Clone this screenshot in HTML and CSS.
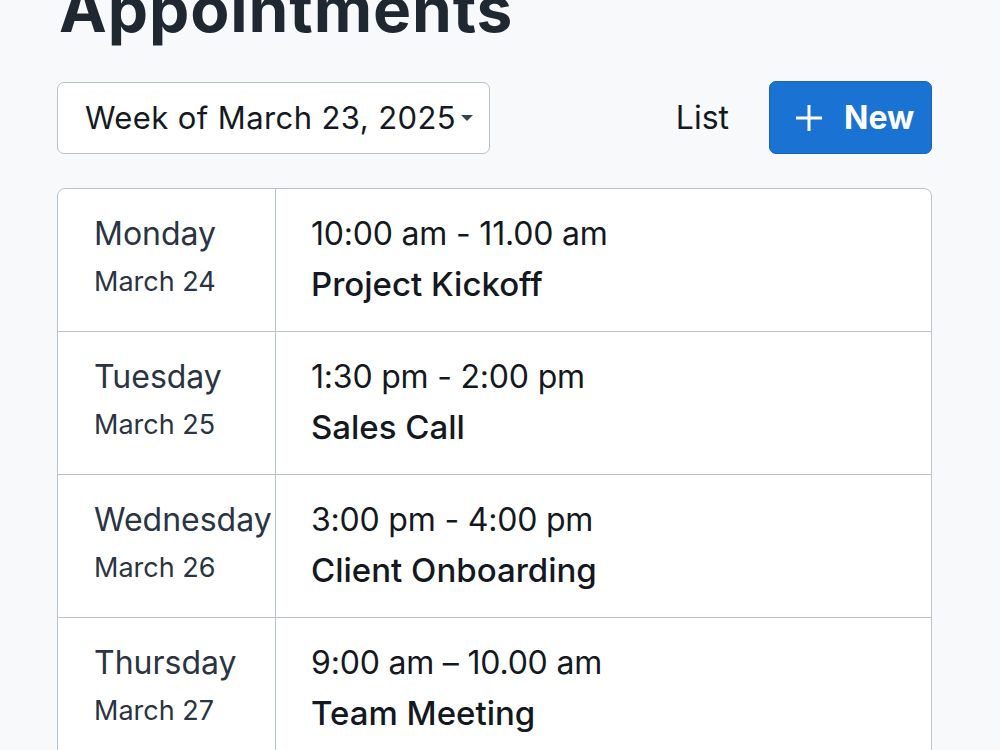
FILE: index.html
```html
<!DOCTYPE html>
<html lang="en">
<head>
    <meta charset="UTF-8">
    <meta name="viewport" content="width=device-width, initial-scale=1.0">
    <title>Appointments</title>
    <link rel="stylesheet" href="styles.css">
</head>
<body>
    <div class="page">
        <h1 class="title">Appointments</h1>

        <div class="toolbar">
            <button class="week-select">
                <span>Week of March 23, 2025</span>
                <span class="caret"></span>
            </button>
            <div class="actions">
                <a class="view-link">List</a>
                <button class="btn-new">
                    <svg class="plus" width="30" height="30" viewBox="0 0 30 30">
                        <path d="M15 2v26M2 15h26" stroke="#fff" stroke-width="3" fill="none"/>
                    </svg>
                    New
                </button>
            </div>
        </div>

        <div class="schedule">
            <div class="row">
                <div class="day">
                    <div class="day-name">Monday</div>
                    <div class="day-date">March 24</div>
                </div>
                <div class="event">
                    <div class="event-time">10:00 am - 11.00 am</div>
                    <div class="event-title">Project Kickoff</div>
                </div>
            </div>
            <div class="row">
                <div class="day">
                    <div class="day-name">Tuesday</div>
                    <div class="day-date">March 25</div>
                </div>
                <div class="event">
                    <div class="event-time">1:30 pm - 2:00 pm</div>
                    <div class="event-title">Sales Call</div>
                </div>
            </div>
            <div class="row">
                <div class="day">
                    <div class="day-name">Wednesday</div>
                    <div class="day-date">March 26</div>
                </div>
                <div class="event">
                    <div class="event-time">3:00 pm - 4:00 pm</div>
                    <div class="event-title">Client Onboarding</div>
                </div>
            </div>
            <div class="row">
                <div class="day">
                    <div class="day-name">Thursday</div>
                    <div class="day-date">March 27</div>
                </div>
                <div class="event">
                    <div class="event-time">9:00 am – 10.00 am</div>
                    <div class="event-title">Team Meeting</div>
                </div>
            </div>
        </div>
    </div>
</body>
</html>
```

FILE: styles.css
```css
body {
    margin: 0;
    background: #f8f9fb;
    font-family: Inter, "Noto Sans", sans-serif;
    color: #1d2330;
    overflow: hidden;
}

.page {
    width: 875px;
    margin-left: 57px;
}

.title {
    margin: -23px 0 0 2px;
    font-size: 64px;
    line-height: 1;
    font-weight: 700;
    color: #1f2731;
    letter-spacing: 0.9px;
}

.toolbar {
    display: flex;
    justify-content: space-between;
    align-items: center;
    margin-top: 40px;
}

.week-select {
    display: flex;
    align-items: center;
    justify-content: space-between;
    height: 72px;
    width: 433px;
    padding: 0 16px 0 27px;
    background: #fff;
    border: 1px solid #b9c0c8;
    border-radius: 7px;
    font-family: inherit;
    font-size: 31px;
    letter-spacing: 0.4px;
    color: #151a22;
    white-space: nowrap;
}

.caret {
    width: 0;
    height: 0;
    border-left: 6px solid transparent;
    border-right: 6px solid transparent;
    border-top: 6px solid #3a4350;
}

.actions {
    display: flex;
    align-items: center;
    gap: 40px;
}

.view-link {
    font-size: 32px;
    color: #151a22;
}

.btn-new {
    display: flex;
    align-items: center;
    gap: 20px;
    height: 73px;
    width: 163px;
    padding: 0 0 0 24px;
    background: #1a73d3;
    border: 1px solid #1565c0;
    border-radius: 7px;
    color: #fff;
    font-family: inherit;
    font-size: 32px;
    font-weight: 700;
}

.schedule {
    margin-top: 34px;
    background: #fff;
    border: 1px solid #b8c3cf;
    border-radius: 8px;
}

.row {
    display: grid;
    grid-template-columns: 218px 1fr;
    height: 142px;
    border-top: 1px solid #b8c3cf;
}

.row:first-child {
    border-top: none;
}

.day {
    border-right: 1px solid #b8c3cf;
    padding: 24px 0 0 36px;
}

.day-name {
    font-size: 32px;
    line-height: 42px;
    color: #2a3442;
}

.day-date {
    margin-top: 9px;
    font-size: 27px;
    line-height: 36px;
    color: #2a3442;
}

.event {
    padding: 24px 0 0 35px;
}

.event-time {
    font-size: 32px;
    line-height: 42px;
    color: #14181f;
    letter-spacing: -0.2px;
}

.event-title {
    margin-top: 9px;
    font-size: 33px;
    line-height: 40px;
    font-weight: 500;
    color: #14181f;
}
```
